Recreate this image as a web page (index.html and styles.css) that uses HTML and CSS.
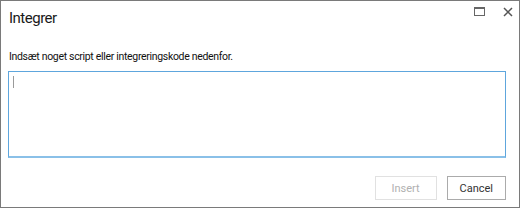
FILE: index.html
```html
<!DOCTYPE html>
<html lang="da">
<head>
  <meta charset="UTF-8">
  <title>Integrer</title>
  <link rel="stylesheet" href="styles.css">
</head>
<body>
  <div class="dialog">
    <div class="dialog-header">
      <h1 class="dialog-title">Integrer</h1>
      <div class="window-buttons">
        <!-- maximize -->
        <svg class="icon-max" width="11" height="9" viewBox="0 0 11 9">
          <rect x="0.5" y="0.5" width="10" height="8" fill="none" stroke="#666" stroke-width="1"/>
          <rect x="0" y="0" width="11" height="2" fill="#666"/>
        </svg>
        <!-- close -->
        <svg class="icon-close" width="10" height="10" viewBox="0 0 10 10">
          <path d="M1 1 L9 9 M9 1 L1 9" stroke="#555" stroke-width="1.5" fill="none"/>
        </svg>
      </div>
    </div>

    <label class="embed-label" for="embedCode">Indsæt noget script eller integreringskode nedenfor.</label>
    <div class="embed-box" id="embedCode">
      <span class="caret"></span>
    </div>

    <div class="dialog-footer">
      <button class="btn btn-disabled" disabled>Insert</button>
      <button class="btn">Cancel</button>
    </div>
  </div>
</body>
</html>
```

FILE: styles.css
```css
/* Dialog */
body {
  margin: 0;
  padding: 0;
  background: #fff;
  font-family: "Segoe UI", Roboto, "Noto Sans", sans-serif;
  color: #222;
}

.dialog {
  width: 520px;
  height: 208px;
  box-sizing: border-box;
  border: 1px solid #7a7a7a;
  padding: 0 13px 0 7px;
  display: flex;
  flex-direction: column;
}

.dialog-header {
  display: flex;
  justify-content: space-between;
  align-items: flex-start;
  height: 48px;
  margin-right: -7px;
}

.dialog-title {
  margin: 7px 0 0 1px;
  font-size: 15px;
  font-weight: normal;
  line-height: 20px;
  letter-spacing: -0.5px;
  color: #1a1a1a;
}

.window-buttons {
  display: flex;
  align-items: flex-start;
  gap: 18px;
  padding-top: 6px;
}

.embed-label {
  font-size: 10.5px;
  line-height: 16px;
  letter-spacing: -0.32px;
  color: #111;
  margin-left: 1px;
}

.embed-box {
  margin-top: 6px;
  height: 87px;
  box-sizing: border-box;
  border: 1px solid #5ea6dd;
  border-bottom: 2px solid #8ac0e8;
  padding: 4px 4px;
}

.caret {
  display: block;
  width: 1px;
  height: 12px;
  background: #9a9a9a;
}

.dialog-footer {
  display: flex;
  justify-content: flex-end;
  gap: 10px;
  margin-top: 18px;
}

.btn {
  height: 24px;
  min-width: 57px;
  padding: 0 12px;
  box-sizing: border-box;
  font-family: inherit;
  font-size: 11px;
  background: #fff;
  border: 1px solid #ababab;
  color: #333;
}

.btn-disabled {
  min-width: 62px;
  border-color: #e1e1e1;
  color: #b1b1b1;
}
```
